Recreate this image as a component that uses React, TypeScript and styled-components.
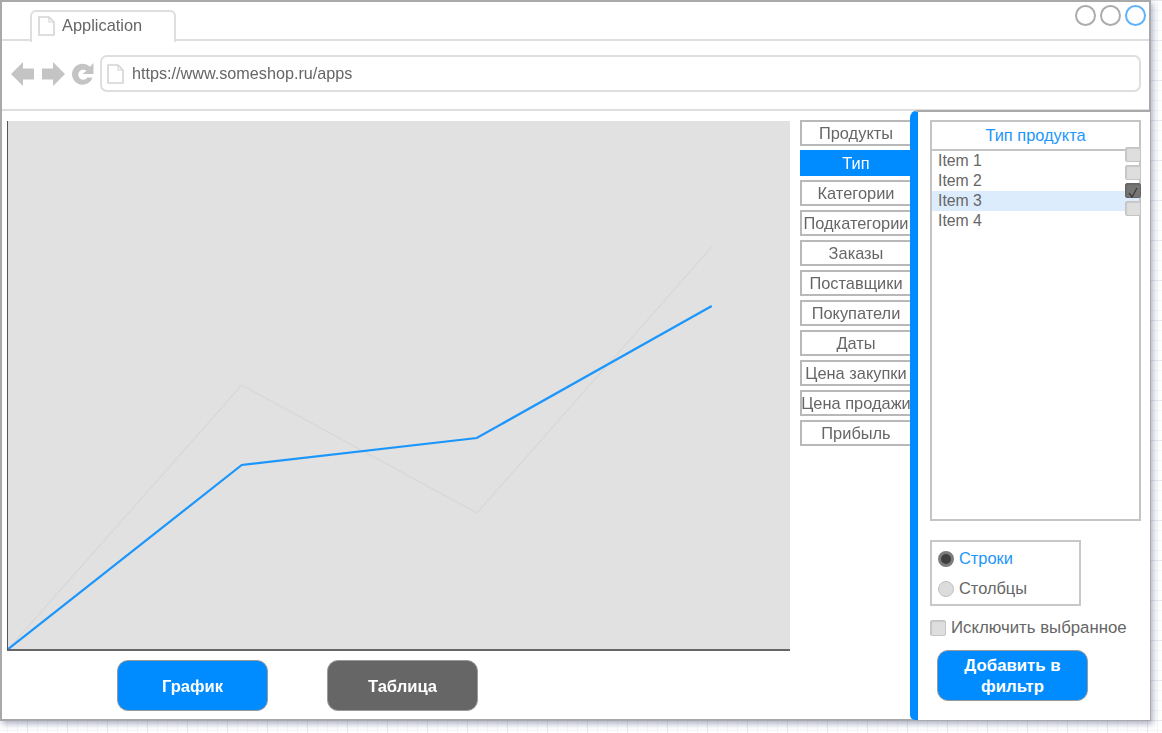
import React, { FC } from 'react';
import styled, { createGlobalStyle } from 'styled-components';

const BLUE = '#008cff';
const LINK_BLUE = '#1c96fb';
const TEXT = '#666666';
const LINE = '#dedede';
const EDGE = '#b8b8b8';

const GlobalStyle = createGlobalStyle`
  html, body {
    margin: 0;
    height: 733px;
    overflow: hidden;
    font-family: "Liberation Sans", Arial, sans-serif;
    font-size: 16.4px;
    color: ${TEXT};
    background-color: #fff;
    background-image:
      linear-gradient(#e6e8f0 1px, transparent 1px),
      linear-gradient(90deg, #e6e8f0 1px, transparent 1px),
      linear-gradient(#f5f6fa 1px, transparent 1px),
      linear-gradient(90deg, #f5f6fa 1px, transparent 1px);
    background-size: 40px 40px, 40px 40px, 10px 10px, 10px 10px;
    background-position: 0 0, 27px 0, 0 0, 7px 0;
  }
  * { box-sizing: border-box; }
`;

const Window = styled.div`
  width: 1151px;
  height: 721px;
  display: flex;
  flex-direction: column;
  background: #fff;
  border: 2px solid #a9a9a9;
  box-shadow: 2px 3px 6px rgba(110, 115, 150, 0.55);
  filter: blur(0.35px);
`;

const TabBar = styled.div`
  height: 39px;
  flex: none;
  display: flex;
  align-items: flex-start;
  padding: 8px 3px 0 28px;
  border-bottom: 2px solid ${LINE};
`;

const Tab = styled.div`
  width: 146px;
  height: 32px;
  display: flex;
  align-items: center;
  gap: 7px;
  padding: 0 0 3px 6px;
  background: #fff;
  border: 2px solid ${LINE};
  border-bottom: none;
  border-radius: 6px 6px 0 0;
`;

const WindowControls = styled.div`
  margin: -5px 0 0 auto;
  display: flex;
  gap: 4px;
`;

const WindowControl = styled.span<{ $active?: boolean }>`
  width: 21px;
  height: 21px;
  border-radius: 50%;
  border: 2px solid ${p => (p.$active ? '#5fb2fb' : '#ababab')};
`;

const Toolbar = styled.div`
  height: 70px;
  flex: none;
  display: flex;
  align-items: center;
  gap: 6px;
  padding: 0 8px 3px 9px;
  border-bottom: 2px solid ${LINE};
  font-size: 16.2px;
`;

const NavIcon = styled.svg`
  width: 24px;
  height: 26px;
  flex: none;
  fill: #c4c4c4;
`;

const AddressBar = styled.div`
  flex: 1;
  height: 37px;
  margin-left: -1px;
  display: flex;
  align-items: center;
  gap: 8px;
  padding-left: 5px;
  border: 2px solid ${LINE};
  border-radius: 7px;
`;

const Main = styled.div`
  flex: 1;
  min-height: 0;
  display: flex;
`;

const ChartColumn = styled.div`
  width: 788px;
  flex: none;
  padding: 10px 0 0 5px;
`;

const Chart = styled.div`
  width: 783px;
  height: 530px;
  background: #e1e1e1;
  border-left: 1.5px solid #555;
  border-bottom: 2px solid #666;
`;

const ChartSvg = styled.svg`
  display: block;
  width: 100%;
  height: 100%;
`;

const ViewButtons = styled.div`
  display: flex;
  gap: 59px;
  padding: 9px 0 0 110px;
`;

const ActionButton = styled.button<{ $dark?: boolean }>`
  width: 151px;
  height: 51px;
  padding: 2px 0 0;
  background: ${p => (p.$dark ? '#666666' : BLUE)};
  color: #fff;
  border: 1px solid #9a9a9a;
  border-radius: 11px;
  font: bold 16.6px/21px "Liberation Sans", Arial, sans-serif;
`;

const FieldMenu = styled.div`
  width: 120px;
  flex: none;
  display: flex;
  flex-direction: column;
  gap: 4px;
  padding: 9px 0 0 10px;
`;

const FieldButton = styled.div<{ $active?: boolean }>`
  height: 26px;
  display: flex;
  align-items: center;
  justify-content: center;
  padding-top: 1px;
  white-space: nowrap;
  background: ${p => (p.$active ? BLUE : '#fff')};
  color: ${p => (p.$active ? '#fff' : TEXT)};
  border: 2px solid ${p => (p.$active ? BLUE : EDGE)};
  border-right: none;
`;

const Panel = styled.div`
  position: relative;
  z-index: 1;
  flex: 1;
  min-width: 0;
  margin: -1px -1px -1px 0;
  padding: 8px 9px 0 12px;
  background: #fff;
  border-top: 2px solid #a9a9a9;
  border-left: 8px solid ${BLUE};
  border-radius: 8px 0 0 5px;
`;

const ListBox = styled.div`
  position: relative;
  width: 211px;
  height: 401px;
  border: 2px solid #c4c4c4;
`;

const ListHeader = styled.div`
  height: 29px;
  display: flex;
  align-items: center;
  justify-content: center;
  color: ${LINK_BLUE};
  border-bottom: 2px solid #c4c4c4;
`;

const ListItem = styled.div<{ $selected?: boolean }>`
  height: 20px;
  line-height: 19px;
  padding-left: 6px;
  font-size: 15.8px;
  background: ${p => (p.$selected ? '#dcecfc' : 'transparent')};
`;

const CheckColumn = styled.div`
  position: absolute;
  top: 25px;
  right: -2px;
  display: flex;
  flex-direction: column;
  gap: 3px;
`;

const CheckBox = styled.span<{ $checked?: boolean }>`
  width: 16px;
  height: 15px;
  flex: none;
  display: block;
  background: ${p => (p.$checked ? '#767676' : '#dedede')};
  border: 1px solid ${p => (p.$checked ? '#666' : '#c4c4c4')};
  border-radius: 2px;
  box-shadow: inset 1px 1px 1px rgba(0, 0, 0, 0.1);
`;

const RadioBox = styled.div`
  width: 151px;
  height: 66px;
  margin-top: 19px;
  display: flex;
  flex-direction: column;
  justify-content: center;
  gap: 10px;
  padding: 1px 0 0 6px;
  border: 2px solid #c8c8c8;
`;

const RadioRow = styled.div<{ $selected?: boolean }>`
  height: 20px;
  display: flex;
  align-items: center;
  gap: 5px;
  color: ${p => (p.$selected ? LINK_BLUE : TEXT)};
`;

const RadioDot = styled.span<{ $selected?: boolean }>`
  width: 16px;
  height: 16px;
  flex: none;
  border-radius: 50%;
  background: ${p => (p.$selected ? '#3f3f3f' : '#dcdcdc')};
  border: ${p => (p.$selected ? '3px solid #7c7c7c' : '1px solid #c0c0c0')};
`;

const ExcludeRow = styled.label`
  margin-top: 12px;
  height: 20px;
  display: flex;
  align-items: center;
  gap: 5px;
  white-space: nowrap;
  font-size: 16.8px;
`;

const ExcludeBox = styled(CheckBox)`
  height: 16px;
`;

const AddButton = styled(ActionButton)`
  display: block;
  margin: 12px 0 0 7px;
  padding: 0;
  font-size: 16.8px;
`;

const PageIcon: FC<{ size?: number }> = ({ size = 20 }) => (
  <svg width={size - 3} height={size} viewBox="0 0 17 20" style={{ flex: 'none' }}>
    <path d="M1 1h10l5 5v13H1z" fill="#fff" stroke="#d4d4d4" strokeWidth="1.6" />
    <path d="M11 1v5h5" fill="none" stroke="#d4d4d4" strokeWidth="1.2" />
  </svg>
);

const FIELDS = [
  'Продукты',
  'Тип',
  'Категории',
  'Подкатегории',
  'Заказы',
  'Поставщики',
  'Покупатели',
  'Даты',
  'Цена закупки',
  'Цена продажи',
  'Прибыль',
];

const ITEMS = ['Item 1', 'Item 2', 'Item 3', 'Item 4'];

export default function App() {
  return (
    <>
      <GlobalStyle />
      <Window>
        <TabBar>
          <Tab>
            <PageIcon />
            Application
          </Tab>
          <WindowControls>
            <WindowControl />
            <WindowControl />
            <WindowControl $active />
          </WindowControls>
        </TabBar>

        <Toolbar>
          <NavIcon viewBox="0 0 24 26">
            <path d="M0 13 12 1v6.500h11v11H12V25z" />
          </NavIcon>
          <NavIcon viewBox="0 0 24 26">
            <path d="M24 13 12 1v6.500H1v11h11V25z" />
          </NavIcon>
          <NavIcon viewBox="0 0 24 26">
            <path d="M19 5.800 22.500 2v11h-11l4-3.200A5 5 0 1 0 16.400 16.500h5.100A10.500 10.500 0 1 1 19 5.800z" />
          </NavIcon>
          <AddressBar>
            <PageIcon />
            https://www.someshop.ru/apps
          </AddressBar>
        </Toolbar>

        <Main>
          <ChartColumn>
            <Chart>
              <ChartSvg viewBox="0 0 781.5 528">
                <polyline
                  points="0,528 233.500,264 468.500,392 703.500,126"
                  fill="none"
                  stroke="#d9d9d9"
                  strokeWidth="1.5"
                />
                <polyline
                  points="0,528 233.500,344 468.500,317 703.500,185"
                  fill="none"
                  stroke="#1c96fb"
                  strokeWidth="2.2"
                />
              </ChartSvg>
            </Chart>
            <ViewButtons>
              <ActionButton>График</ActionButton>
              <ActionButton $dark>Таблица</ActionButton>
            </ViewButtons>
          </ChartColumn>

          <FieldMenu>
            {FIELDS.map(field => (
              <FieldButton key={field} $active={field === 'Тип'}>
                {field}
              </FieldButton>
            ))}
          </FieldMenu>

          <Panel>
            <ListBox>
              <ListHeader>Тип продукта</ListHeader>
              {ITEMS.map(item => (
                <ListItem key={item} $selected={item === 'Item 3'}>
                  {item}
                </ListItem>
              ))}
              <CheckColumn>
                {ITEMS.map(item => (
                  <CheckBox key={item} $checked={item === 'Item 3'}>
                    {item === 'Item 3' && (
                      <svg width="14" height="13" viewBox="0 0 14 13">
                        <path d="M3 7l3 4 5-9" fill="none" stroke="#3c3c3c" strokeWidth="1.3" />
                      </svg>
                    )}
                  </CheckBox>
                ))}
              </CheckColumn>
            </ListBox>

            <RadioBox>
              <RadioRow $selected>
                <RadioDot $selected />
                Строки
              </RadioRow>
              <RadioRow>
                <RadioDot />
                Столбцы
              </RadioRow>
            </RadioBox>

            <ExcludeRow>
              <ExcludeBox />
              Исключить выбранное
            </ExcludeRow>

            <AddButton>
              Добавить в
              <br />
              фильтр
            </AddButton>
          </Panel>
        </Main>
      </Window>
    </>
  );
}
